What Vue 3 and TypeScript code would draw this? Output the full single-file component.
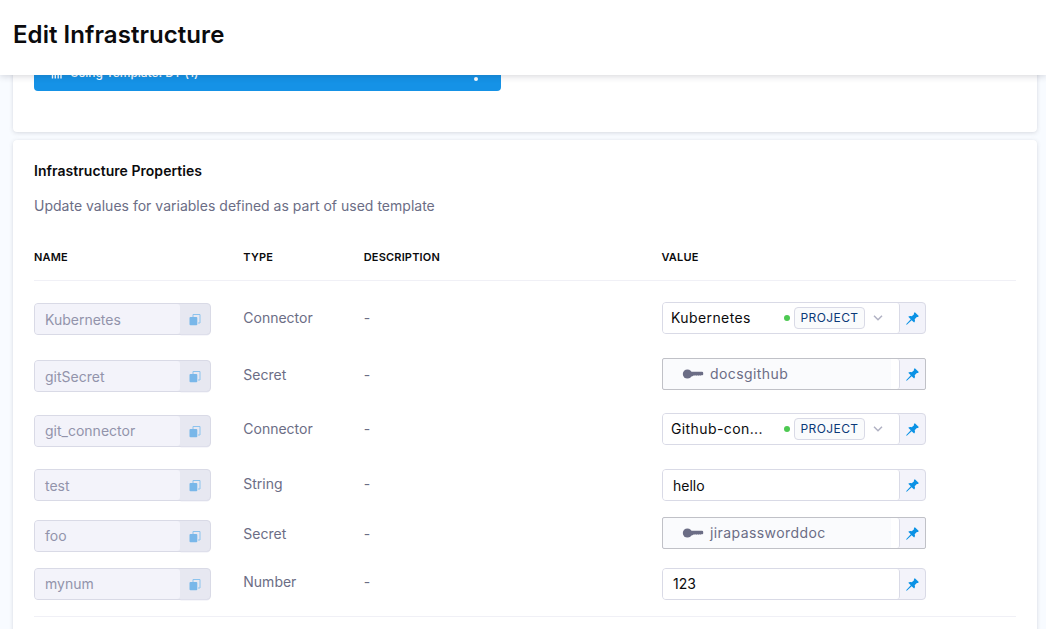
<script setup lang="ts">
type Kind = 'Connector' | 'Secret' | 'String' | 'Number'

interface Variable {
  name: string
  type: Kind
  value: string
}

const variables: Variable[] = [
  { name: 'Kubernetes', type: 'Connector', value: 'Kubernetes' },
  { name: 'gitSecret', type: 'Secret', value: 'docsgithub' },
  { name: 'git_connector', type: 'Connector', value: 'Github-con...' },
  { name: 'test', type: 'String', value: 'hello' },
  { name: 'foo', type: 'Secret', value: 'jirapassworddoc' },
  { name: 'mynum', type: 'Number', value: '123' },
]
</script>

<template>
  <div class="page">
    <header class="header"><h1>Edit Infrastructure</h1></header>
    <main class="content">
      <section class="card template-card">
        <div class="template-bar">
          <svg class="tpl-icon" width="12" height="12" viewBox="0 0 12 12">
            <path d="M0 1h11M1.5 3.5v8M4.3 3.5v8M7.2 11.5v-7h2.8v7M7 7h3" fill="none" stroke="#fff" stroke-width="1.4" />
          </svg>
          <span class="tpl-label">Using Template: DT (1)</span>
          <svg width="4" height="16" viewBox="0 0 4 16" fill="#fff">
            <circle cx="2" cy="2" r="2" /><circle cx="2" cy="8" r="2" /><circle cx="2" cy="14" r="2" />
          </svg>
        </div>
      </section>

      <section class="card props">
        <h2>Infrastructure Properties</h2>
        <p class="hint">Update values for variables defined as part of used template</p>
        <div class="grid head">
          <span>NAME</span><span>TYPE</span><span>DESCRIPTION</span><span>VALUE</span>
        </div>
        <div class="rows">
          <div v-for="v in variables" :key="v.name" class="grid row">
            <div class="name-box">
              <span class="name">{{ v.name }}</span>
              <span class="copy">
                <svg width="12" height="12" viewBox="0 0 12 12">
                  <path d="M4 3V.5h7v8.5H9" fill="none" stroke="#8cc3ee" stroke-width="1" />
                  <rect x="0.5" y="3" width="7.8" height="8.3" rx="1" fill="#79b7e9" />
                </svg>
              </span>
            </div>
            <span class="cell">{{ v.type }}</span>
            <span class="cell">-</span>
            <div class="value-box" :class="v.type.toLowerCase()">
              <div class="field">
                <svg v-if="v.type === 'Secret'" class="key" width="22" height="10" viewBox="0 0 22 10" fill="#6b6d85">
                  <circle cx="5.4" cy="5" r="4.6" />
                  <path d="M8 2.8h12a1.2 1.2 0 0 1 1.2 1.2v1.2a1 1 0 0 1-1 1.1H19l-.7.4-.8-.4-.9.4-.9-.4-1 .4-.9-.4-.9.4-.9-.4-1 .7-1.5.6H8z" />
                </svg>
                <span class="value">{{ v.value }}</span>
                <template v-if="v.type === 'Connector'">
                  <i class="dot"></i>
                  <span class="tag">PROJECT</span>
                  <svg class="chevron" width="10" height="6" viewBox="0 0 10 6">
                    <path d="M1 .8l4 4 4-4" fill="none" stroke="#b0b1c3" stroke-width="1.5" />
                  </svg>
                </template>
              </div>
              <span class="pin">
                <svg width="13" height="13" viewBox="0 0 12 12" fill="#0b92e5">
                  <path d="M8.2.2l3.6 3.6-.7.9-1.1-.1-2 2.1c.5 1.2.4 2.2-.5 3.1L5.2 7.5.7 11.7.1 11.2l4.3-4.5L2.1 4.4c.9-.8 2-.9 3.2-.4l2.1-2-.1-1.1z" />
                </svg>
              </span>
            </div>
          </div>
        </div>
      </section>
    </main>
  </div>
</template>

<style>
body {
  background: #f8fbff;
}
</style>

<style scoped>
* {
  box-sizing: border-box;
}
.page {
  height: 629px;
  overflow: hidden;
  display: flex;
  flex-direction: column;
  font-family: Inter, 'Liberation Sans', sans-serif;
  color: #0b0b0d;
}
.header {
  height: 75px;
  flex: none;
  padding: 0 13px 6px;
  display: flex;
  align-items: center;
  background: #fff;
  box-shadow: 0 1px 7px rgba(40, 41, 61, 0.2);
  z-index: 1;
}
h1 {
  margin: 0;
  font-size: 24px;
  line-height: 30px;
  font-weight: 600;
  letter-spacing: 0.06px;
}
.content {
  flex: 1;
  min-height: 0;
  overflow: hidden;
  padding: 0 9px 0 13px;
}
.card {
  background: #fff;
  border-radius: 4px;
  box-shadow: 0 0 1px rgba(40, 41, 61, 0.04), 0 1px 4px rgba(96, 97, 112, 0.2);
}
.template-card {
  margin-top: -40px;
  height: 97px;
  padding: 21px;
}
.template-bar {
  width: 467px;
  height: 35px;
  padding: 0 23px 1px 17px;
  display: flex;
  align-items: center;
  background: #1592e6;
  border-radius: 4px;
  color: #fff;
}
.tpl-label {
  flex: 1;
  margin: -2px 0 0 7px;
  font-size: 12px;
  font-weight: 500;
  letter-spacing: -0.04px;
}
.props {
  margin-top: 8px;
  height: 600px;
  padding: 21px 21px 0;
}
h2 {
  margin: 0;
  font-size: 14px;
  line-height: 20px;
  font-weight: 600;
  letter-spacing: 0.04px;
}
.hint {
  margin: 15px 0 0;
  font-size: 14px;
  line-height: 20px;
  letter-spacing: 0.01px;
  color: #6b6d85;
}
.grid {
  display: grid;
  grid-template-columns: 209.3px 120.4px 298.3px 264px;
  align-items: start;
}
.head {
  grid-template-columns: 209.3px 120.4px 297.8px 264px;
  margin-top: 31px;
  height: 34px;
  border-bottom: 1px solid #f0f0f6;
  font-size: 11px;
  line-height: 20px;
  font-weight: 600;
  letter-spacing: 0.18px;
}
.rows {
  padding-top: 21px;
  height: 336px;
  border-bottom: 1px solid #f0f0f6;
}
.row {
  --name-y: 0px;
  --name-pad: 1px;
  --text-y: 6px;
  height: 56px;
}
.row:nth-child(1) { --name-y: 1px; }
.row:nth-child(2) { --name-y: 2px; --text-y: 7px; height: 55px; }
.row:nth-child(3) { --name-y: 2px; --name-pad: 0px; }
.row:nth-child(4) { --text-y: 5px; height: 48px; }
.row:nth-child(5) { --name-y: 3px; --name-pad: 0px; --text-y: 7px; height: 51px; }
.row:nth-child(6) { --name-pad: 0px; --text-y: 4px; height: 48px; }
.cell {
  margin-top: var(--text-y);
  font-size: 14px;
  line-height: 20px;
  color: #6b6d85;
}
.name-box {
  width: 177px;
  height: 32px;
  margin-top: var(--name-y);
  display: flex;
  background: #e7e8f1;
  border: 1px solid #d9dae6;
  border-radius: 4px;
}
.name {
  width: 145px;
  padding: var(--name-pad) 0 0 10px;
  font-size: 14px;
  line-height: 30px;
  color: #9293ab;
  background: #f3f3fa;
  border-radius: 3px;
}
.copy {
  flex: 1;
  display: flex;
  align-items: center;
  padding: 2px 0 0 9px;
  border-radius: 0 0 3px 0;
  box-shadow: 0 2px 0 -0.5px rgba(225, 226, 238, 0.6);
}
.value-box {
  height: 32px;
  display: flex;
  background: #f3f3fa;
  border: 1px solid #d9dae6;
  border-radius: 4px;
}
.field {
  width: 237px;
  display: flex;
  align-items: center;
  background: #fff;
  border-right: 1px solid #d9dae6;
  border-radius: 3px;
  font-size: 14px;
}
.string .field {
  padding: 1px 0 0 10px;
}
.number .field {
  padding-left: 10px;
}
.number .value {
  margin-top: -1px;
}
.connector .field {
  padding-left: 8px;
  letter-spacing: 0.4px;
}
.connector .value {
  width: 113px;
  margin-top: -2px;
}
.dot {
  width: 6px;
  height: 6px;
  flex: none;
  border-radius: 50%;
  background: #4dc952;
}
.tag {
  width: 71px;
  height: 22px;
  flex: none;
  margin-left: 4px;
  border: 1px solid #d9dae6;
  border-radius: 4px;
  background: #fafbfc;
  color: #0b3978;
  font-size: 12px;
  line-height: 20px;
  text-align: center;
}
.chevron {
  margin-left: 8px;
}
.secret {
  border-color: #c0c1c7;
  border-radius: 2px;
}
.secret .field {
  padding-left: 19px;
  background: linear-gradient(90deg, #fafbfd 228px, #fff 228px);
  color: #6b6d85;
  letter-spacing: 0.42px;
}
.secret .value {
  margin-top: -2px;
}
.key {
  margin: -1px 6px 0 0;
}
.pin {
  flex: 1;
  display: flex;
  align-items: center;
  justify-content: center;
}
</style>
